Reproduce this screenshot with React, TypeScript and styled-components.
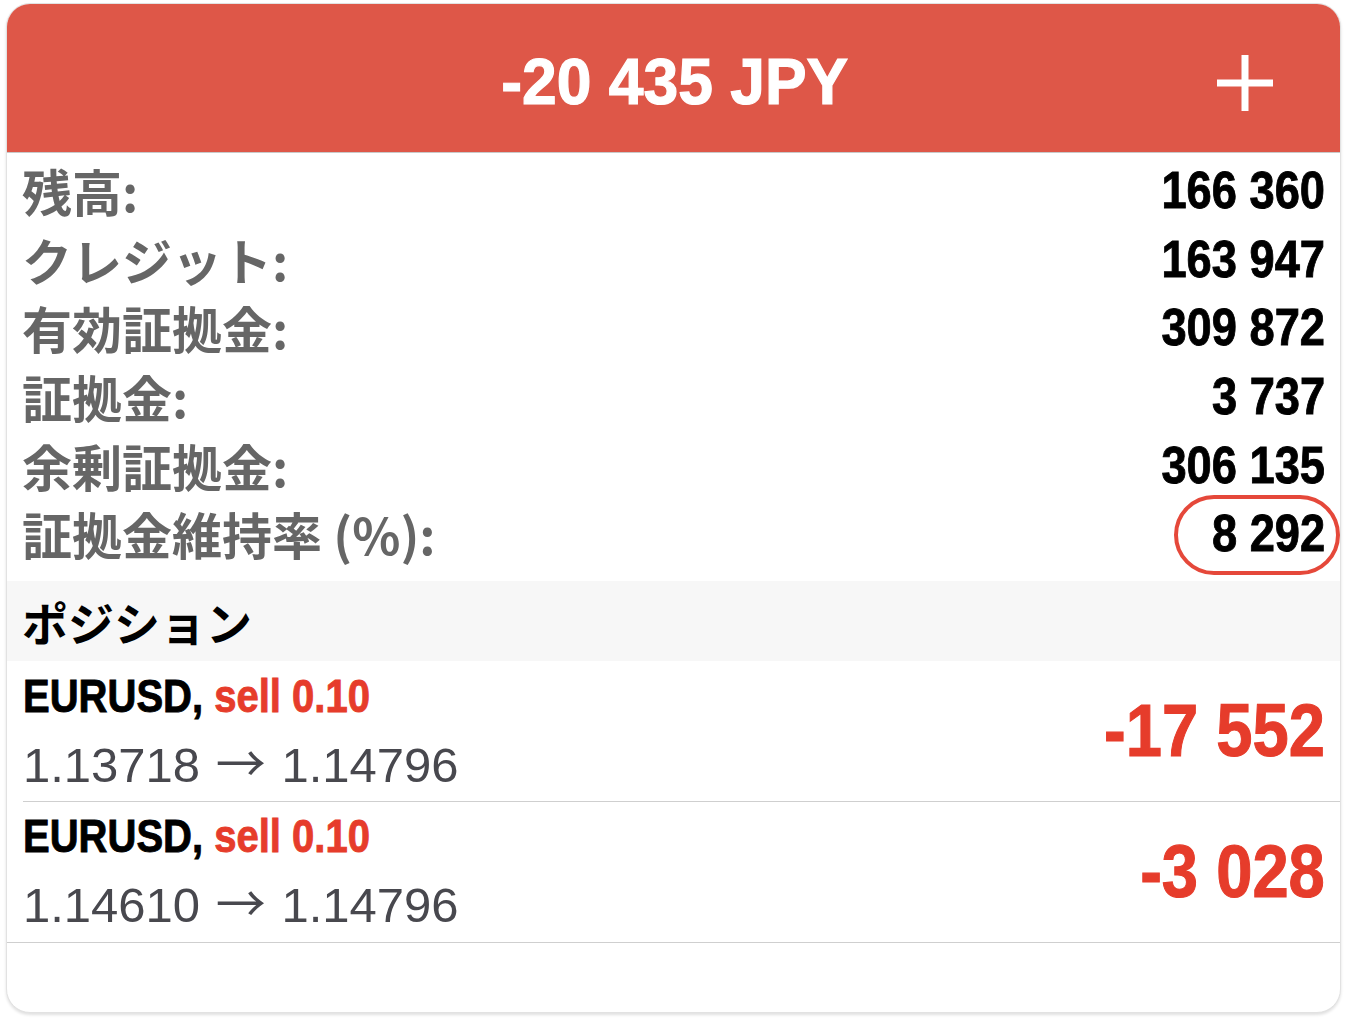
import React from "react";
import styled, { createGlobalStyle } from "styled-components";

const GlobalStyle = createGlobalStyle`
  html, body { margin: 0; padding: 0; background: #ffffff; }
  body { font-family: "Liberation Sans", Arial, sans-serif; }
  * { box-sizing: border-box; }
`;

const SANS = `"Liberation Sans", Arial, Helvetica, sans-serif`;
const CJK = `"Noto Sans CJK JP", "Noto Sans", sans-serif`;

const Page = styled.div`
  padding: 3px 7px 7px 6px;
`;

const Card = styled.div`
  width: 1335px;
  height: 1010px;
  border-radius: 24px;
  background: #fff;
  border: 1px solid #e2e2e2;
  box-shadow: 0 2px 3px rgba(0, 0, 0, 0.12);
  overflow: hidden;
  display: flex;
  flex-direction: column;
`;

/* Helvetica-condensed look: Liberation Sans Bold narrowed horizontally */
const Condensed = styled.span<{ $scale: number; $origin: string; $stroke?: number }>`
  display: inline-block;
  white-space: nowrap;
  transform: scaleX(${(p) => p.$scale});
  transform-origin: ${(p) => p.$origin};
  -webkit-text-stroke: ${(p) => p.$stroke ?? 0.9}px currentColor;
`;

const Header = styled.div`
  height: 149px;
  flex: none;
  background: #de5748;
  border-bottom: 1px solid #c9c9c9;
  display: flex;
  align-items: center;
  justify-content: center;
  position: relative;
`;

const Title = styled.div`
  font-family: ${SANS};
  font-weight: 700;
  font-size: 65px;
  line-height: 1;
  color: #fff;
  margin-left: 2px;
  margin-top: 6px;
`;

const AddButton = styled.button`
  position: absolute;
  right: 66px;
  top: 50px;
  width: 58px;
  height: 58px;
  padding: 0;
  border: none;
  background: transparent;
  display: flex;
  align-items: center;
  justify-content: center;
`;

const Summary = styled.div`
  padding: 3px 15px 13px 15px;
  display: flex;
  flex-direction: column;
`;

const SummaryRow = styled.div`
  height: 68.6px;
  display: flex;
  align-items: center;
  justify-content: space-between;
`;

const Label = styled.div`
  font-family: ${CJK};
  font-weight: 700;
  font-size: 50px;
  color: #666666;
  line-height: 1;
`;

const Value = styled.div`
  position: relative;
  font-family: ${SANS};
  font-weight: 700;
  font-size: 52px;
  color: #000;
  line-height: 1;
`;

const Oval = styled.span`
  position: absolute;
  right: -15px;
  width: 166px;
  top: -12px;
  bottom: -16px;
  border: 4px solid #e5483a;
  border-radius: 42px;
  pointer-events: none;
`;

const SectionHeader = styled.div`
  height: 80px;
  flex: none;
  background: #f7f7f7;
  display: flex;
  align-items: center;
  padding-left: 15px;
  font-family: ${CJK};
  font-weight: 700;
  font-size: 46px;
  color: #000;
`;

const PositionRow = styled.div<{ $inset: boolean }>`
  height: 141px;
  flex: none;
  display: flex;
  align-items: center;
  justify-content: space-between;
  padding: 0 15px 0 16px;
  position: relative;
  border-bottom: ${(p) => (p.$inset ? "none" : "1px solid #cfcfcf")};
  &::after {
    content: "";
    display: ${(p) => (p.$inset ? "block" : "none")};
    position: absolute;
    left: 16px;
    right: 0;
    bottom: 0;
    height: 1px;
    background: #cfcfcf;
  }
`;

const PositionInfo = styled.div`
  display: flex;
  flex-direction: column;
  padding-bottom: 2px;
`;

const Symbol = styled.div`
  font-family: ${SANS};
  font-weight: 700;
  font-size: 46px;
  line-height: 64px;
  color: #000;
`;

const Side = styled.span`
  color: #e63c2b;
`;

const Prices = styled.div`
  font-family: ${SANS};
  font-size: 49px;
  line-height: 64px;
  color: #48484e;
`;

const Arrow = styled.span`
  font-family: "Noto Sans CJK JP", "DejaVu Sans", sans-serif;
  font-weight: 400;
  font-size: 50px;
  margin: 0 2px;
`;

const Profit = styled.div`
  font-family: ${SANS};
  font-weight: 700;
  font-size: 74px;
  color: #e63c2b;
  line-height: 1;
`;

const summary = [
  { label: "残高:", value: "166 360" },
  { label: "クレジット:", value: "163 947" },
  { label: "有効証拠金:", value: "309 872" },
  { label: "証拠金:", value: "3 737" },
  { label: "余剰証拠金:", value: "306 135" },
  { label: "証拠金維持率 (%):", value: "8 292", mark: true },
];

const positions = [
  { symbol: "EURUSD", side: "sell 0.10", from: "1.13718", to: "1.14796", profit: "-17 552" },
  { symbol: "EURUSD", side: "sell 0.10", from: "1.14610", to: "1.14796", profit: "-3 028" },
];

export default function App() {
  return (
    <>
      <GlobalStyle />
      <Page>
        <Card>
          <Header>
            <Title>
              <Condensed $scale={0.96} $origin="center" $stroke={1.2}>
                -20 435 JPY
              </Condensed>
            </Title>
            <AddButton aria-label="add">
              <svg width="58" height="58" viewBox="0 0 58 58">
                <rect x="25.5" y="1" width="7" height="56" fill="#fff" />
                <rect x="1" y="25.5" width="56" height="7" fill="#fff" />
              </svg>
            </AddButton>
          </Header>
          <Summary>
            {summary.map((r) => (
              <SummaryRow key={r.label}>
                <Label>{r.label}</Label>
                <Value>
                  <Condensed $scale={0.87} $origin="right">{r.value}</Condensed>
                  {r.mark && <Oval />}
                </Value>
              </SummaryRow>
            ))}
          </Summary>
          <SectionHeader>ポジション</SectionHeader>
          {positions.map((p, i) => (
            <PositionRow key={i} $inset={i < positions.length - 1}>
              <PositionInfo>
                <Symbol>
                  <Condensed $scale={0.87} $origin="left">
                    {p.symbol}, <Side>{p.side}</Side>
                  </Condensed>
                </Symbol>
                <Prices>
                  {p.from} <Arrow>→</Arrow> {p.to}
                </Prices>
              </PositionInfo>
              <Profit>
                <Condensed $scale={0.88} $origin="right" $stroke={1.1}>
                  {p.profit}
                </Condensed>
              </Profit>
            </PositionRow>
          ))}
        </Card>
      </Page>
    </>
  );
}
